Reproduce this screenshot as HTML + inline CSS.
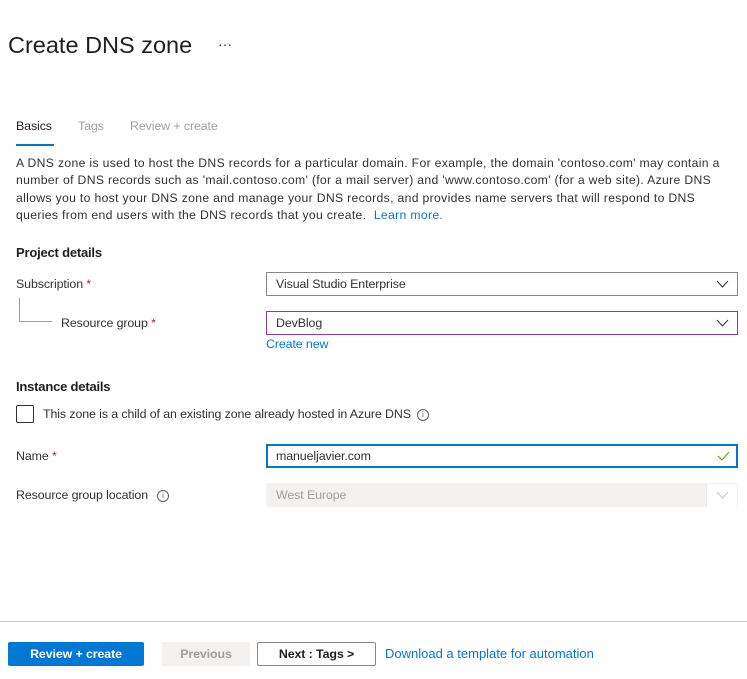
<!DOCTYPE html>
<html><head><style>
body{margin:0;width:747px;height:679px;background:#fff;font-family:"Liberation Sans",sans-serif;color:#323130;position:relative;overflow:hidden;font-size:13px}
.a{position:absolute;white-space:nowrap}
.t{font-size:12.4px;letter-spacing:-0.1px}
.box{position:absolute;border:1px solid #8a8886;box-sizing:border-box;left:266px;width:472px;height:24px;font-size:12.4px;padding:4px 9px;letter-spacing:-0.1px}
.chev{position:absolute;right:8px;top:5px}
.req{color:#a4262c}
.lnk{color:#0078d4}
.info{display:inline-block;width:10px;height:10px;border:1px solid #605e5c;border-radius:50%;font-size:8px;line-height:10px;text-align:center;vertical-align:middle;margin-left:6px;color:#605e5c}
</style></head><body>
<div class="a" style="left:8px;top:32px;font-size:23.5px;color:#201f1e">Create DNS zone</div>
<div class="a" style="left:218px;top:36px;font-size:14px">···</div>
<div class="a t" style="left:16px;top:119px;color:#201f1e">Basics</div>
<div class="a" style="left:16px;top:144px;width:38px;height:2px;background:#0078d4"></div>
<div class="a t" style="left:78px;top:119px;color:#a19f9d">Tags</div>
<div class="a t" style="left:130px;top:119px;color:#a19f9d">Review + create</div>
<div class="a" style="left:16px;top:155px;line-height:17.3px;font-size:12.2px;letter-spacing:0.33px">A DNS zone is used to host the DNS records for a particular domain. For example, the domain 'contoso.com' may contain a<br>number of DNS records such as 'mail.contoso.com' (for a mail server) and 'www.contoso.com' (for a web site). Azure DNS<br>allows you to host your DNS zone and manage your DNS records, and provides name servers that will respond to DNS<br>queries from end users with the DNS records that you create. &nbsp;<span class="lnk">Learn more.</span></div>
<div class="a" style="left:16px;top:245px;font-size:13px;font-weight:bold;color:#201f1e;letter-spacing:-0.2px">Project details</div>
<div class="a t" style="left:16px;top:277px">Subscription <span class="req">*</span></div>
<div class="box" style="top:272px">Visual Studio Enterprise<svg class="chev" width="13" height="12"><path d="M1 3l5.5 6L12 3" stroke="#323130" fill="none"/></svg></div>
<div class="a" style="left:19px;top:298px;width:1px;height:23px;background:#a19f9d"></div>
<div class="a" style="left:19px;top:321px;width:33px;height:1px;background:#a19f9d"></div>
<div class="a t" style="left:61px;top:316px">Resource group <span class="req">*</span></div>
<div class="box" style="top:311px;border-color:#8a3c9c">DevBlog<svg class="chev" width="13" height="12"><path d="M1 3l5.5 6L12 3" stroke="#323130" fill="none"/></svg></div>
<div class="a t lnk" style="left:266px;top:337px">Create new</div>
<div class="a" style="left:16px;top:379px;font-size:13px;font-weight:bold;color:#201f1e;letter-spacing:-0.2px">Instance details</div>
<div class="a" style="left:16px;top:405px;width:18px;height:18px;border:1px solid #323130;border-radius:2px;box-sizing:border-box"></div>
<div class="a t" style="left:43px;top:407px">This zone is a child of an existing zone already hosted in Azure DNS<span class="info">i</span></div>
<div class="a t" style="left:16px;top:449px">Name <span class="req">*</span></div>
<div class="box" style="top:444px;border:2px solid #0078d4;padding:3px 8px">manueljavier.com<svg class="chev" width="13" height="12" style="right:6px;top:4px"><path d="M1 6l4 4 7-8" stroke="#57a300" fill="none"/></svg></div>
<div class="a t" style="left:16px;top:488px">Resource group location<span class="info" style="margin-left:9px">i</span></div>
<div class="box" style="top:483px;background:#f3f2f1;border-color:#f3f2f1;color:#a19f9d">West Europe<div style="position:absolute;right:0;top:0;width:30px;height:24px;background:#fff;border-left:1px solid #edebe9"></div><svg class="chev" width="13" height="12" style="right:8px"><path d="M1 3l5.5 6L12 3" stroke="#c8c6c4" fill="none"/></svg></div>
<div class="a" style="left:0;top:621px;width:747px;height:1px;background:#c8c6c4"></div>
<div class="a t" style="left:8px;top:642px;width:136px;height:24px;background:#0078d4;color:#fff;font-weight:bold;text-align:center;line-height:24px;border-radius:2px">Review + create</div>
<div class="a t" style="left:162px;top:642px;width:88px;height:24px;background:#f3f2f1;color:#a19f9d;font-weight:bold;text-align:center;line-height:24px">Previous</div>
<div class="a t" style="left:257px;top:642px;width:119px;height:24px;border:1px solid #8a8886;box-sizing:border-box;color:#201f1e;font-weight:bold;text-align:center;line-height:22px;border-radius:2px">Next : Tags &gt;</div>
<div class="a lnk" style="left:385px;top:646px;font-size:13px">Download a template for automation</div>
</body></html>
